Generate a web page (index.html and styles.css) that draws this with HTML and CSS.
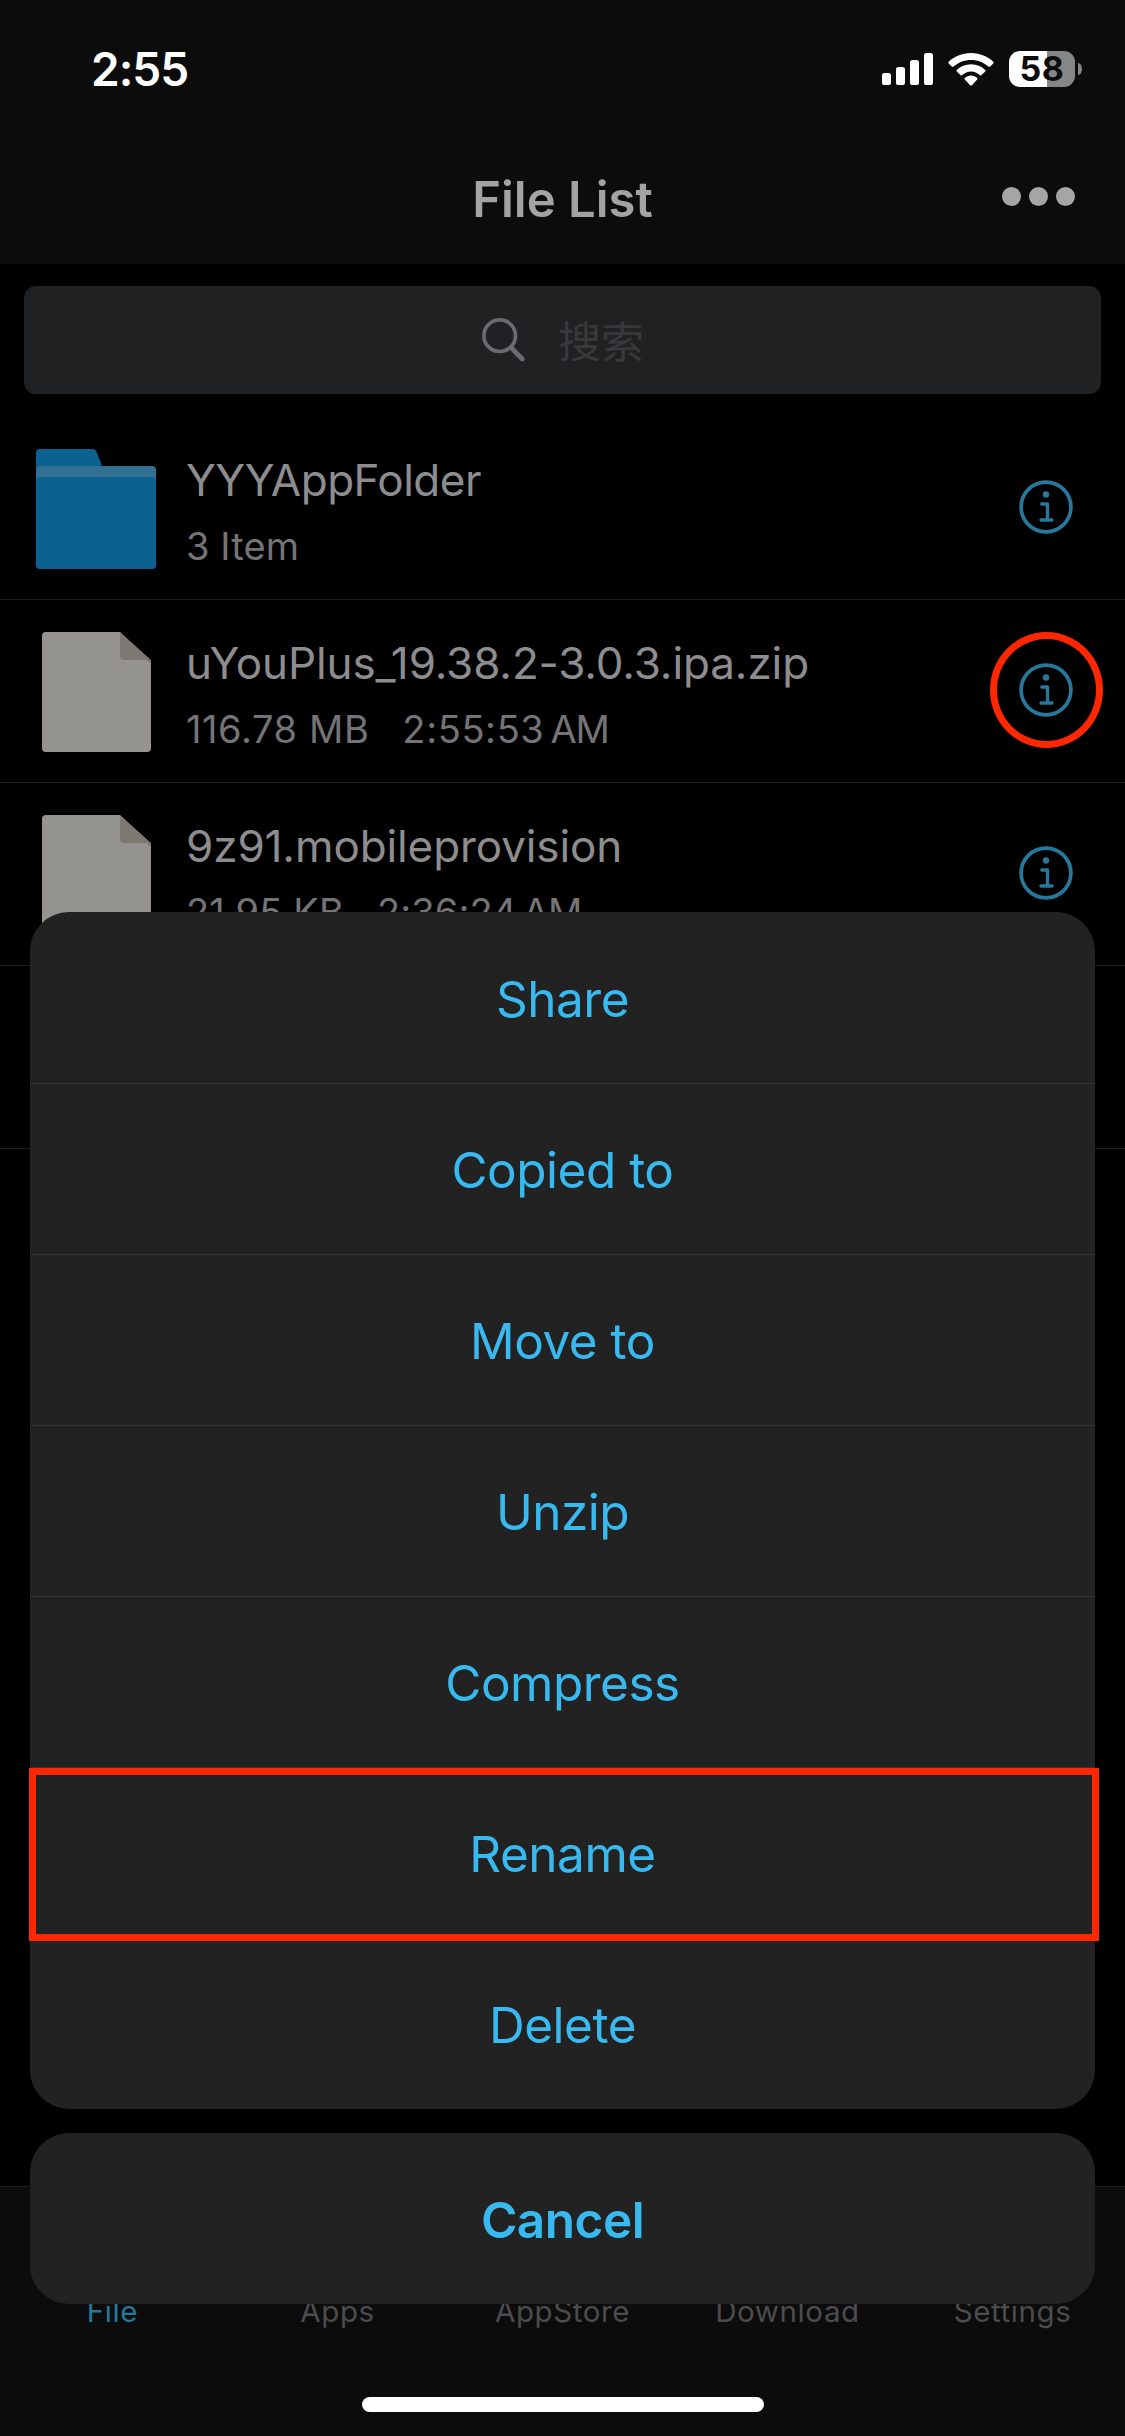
FILE: index.html
```
<!DOCTYPE html>
<html lang="en">
<head>
<meta charset="utf-8">
<title>File List</title>
<link rel="stylesheet" href="styles.css">
</head>
<body>
<svg width="0" height="0" class="defs">
  <symbol id="info" viewBox="0 0 56 56">
    <circle cx="28" cy="28" r="24.9" fill="none" stroke="currentColor" stroke-width="3.7"/>
    <circle cx="28" cy="15.500" r="3.2" fill="currentColor"/>
    <path d="M23.800 25H29.500V41M23 41H34" fill="none" stroke="currentColor" stroke-width="3.3" stroke-linecap="round" stroke-linejoin="round"/>
  </symbol>
  <symbol id="doc" viewBox="0 0 110 120">
    <path d="M4 0H78L109 31V116a4 4 0 0 1-4 4H4a4 4 0 0 1-4-4V4a4 4 0 0 1 4-4Z" fill="#959390"/>
    <path d="M78 0L109 28V31L106 28H82a4 4 0 0 1-4-4Z" fill="#7e7872"/>
  </symbol>
</svg>
<div class="screen">
  <header class="top">
    <div class="status">
      <span class="time">2:55</span>
      <div class="status-icons">
        <svg width="51" height="32" viewBox="0 0 51 32" fill="#fff">
          <rect x="0" y="20" width="9" height="12" rx="2.6"/>
          <rect x="14" y="14" width="9" height="18" rx="2.6"/>
          <rect x="28" y="7" width="9" height="25" rx="2.6"/>
          <rect x="42" y="0" width="9" height="32" rx="2.6"/>
        </svg>
        <svg width="46" height="33" viewBox="0 0 46 33" fill="#fff">
          <path d="M23 0C32 0 40 3.5 45.300 8.700Q46 9.600 45.300 10.400L42.200 13.600Q41.300 14.400 40.400 13.600C36 9.600 30 7 23 7S10 9.600 5.600 13.600Q4.700 14.400 3.800 13.600L.7 10.400Q0 9.600.7 8.700C6 3.500 14 0 23 0Z"/>
          <path d="M23 11.200C28.600 11.200 33.600 13.400 37.200 16.900Q38 17.800 37.200 18.600L33.600 22.100Q32.700 22.900 31.800 22.100C29.500 20 26.400 18.500 23 18.500S16.500 20 14.200 22.100Q13.300 22.900 12.400 22.100L8.800 18.600Q8 17.800 8.800 16.900C12.400 13.400 17.400 11.200 23 11.200Z"/>
          <path d="M23 22.500C25.500 22.500 27.600 23.400 29.200 24.900Q30 25.800 29.200 26.600L23.900 32.200Q23 33 22.100 32.200L16.800 26.600Q16 25.800 16.800 24.900C18.400 23.400 20.500 22.500 23 22.500Z"/>
        </svg>
        <div class="battery"><span class="level">58</span><i class="nub"></i></div>
      </div>
    </div>
    <div class="nav">
      <h1>File List</h1>
      <div class="more"><i></i><i></i><i></i></div>
    </div>
  </header>

  <div class="search">
    <svg width="44" height="45" viewBox="0 0 44 45" fill="none" stroke="#6b6a6e">
      <circle cx="17.700" cy="17.700" r="15.800" stroke-width="3.700"/>
      <path d="M29.500 30L40.300 41" stroke-width="4.800" stroke-linecap="round"/>
    </svg>
    <span>搜索</span>
  </div>

  <main class="list">
    <div class="row">
      <div class="thumb">
        <svg width="120" height="120" viewBox="0 0 120 120">
          <path d="M4 0H57Q59.500 0 60.500 2.500L66 17V30H0V4a4 4 0 0 1 4-4Z" fill="#0b618f"/>
          <path d="M4 17H116a4 4 0 0 1 4 4V40H0V21a4 4 0 0 1 4-4Z" fill="#327093"/>
          <path d="M4 28H116a4 4 0 0 1 4 4V116a4 4 0 0 1-4 4H4a4 4 0 0 1-4-4V32a4 4 0 0 1 4-4Z" fill="#0b618f"/>
        </svg>
      </div>
      <div class="text">
        <div class="name tight">YYYAppFolder</div>
        <div class="meta count"><span>3 Item</span></div>
      </div>
      <svg class="info" width="56" height="56"><use href="#info"/></svg>
    </div>
    <div class="row">
      <div class="thumb"><svg width="110" height="120"><use href="#doc"/></svg></div>
      <div class="text">
        <div class="name">uYouPlus_19.38.2-3.0.3.ipa.zip</div>
        <div class="meta"><span>116.78 MB</span><span class="when"><span>2:55:53</span><span class="ampm">AM</span></span></div>
      </div>
      <svg class="info" width="56" height="56"><use href="#info"/></svg>
      <i class="ring"></i>
    </div>
    <div class="row">
      <div class="thumb"><svg width="110" height="120"><use href="#doc"/></svg></div>
      <div class="text">
        <div class="name">9z91.mobileprovision</div>
        <div class="meta count"><span>21.95 KB</span><span class="when"><span>2:36:24</span><span class="ampm">AM</span></span></div>
      </div>
      <svg class="info" width="56" height="56"><use href="#info"/></svg>
    </div>
    <div class="row"></div>
  </main>

  <nav class="tabs">
    <span class="active">File</span><span>Apps</span><span>AppStore</span><span>Download</span><span>Settings</span>
  </nav>

  <div class="sheet">
    <div class="actions">
      <button>Share</button>
      <button>Copied to</button>
      <button>Move to</button>
      <button>Unzip</button>
      <button>Compress</button>
      <button>Rename</button>
      <button>Delete</button>
    </div>
    <button class="cancel">Cancel</button>
    <i class="frame"></i>
  </div>
  <i class="home"></i>
</div>
</body>
</html>
```
FILE: styles.css
```
* { box-sizing: border-box; margin: 0; }
body { background: #000; font-family: Inter, "Noto Sans CJK SC", sans-serif; }
.defs { position: absolute; }
svg { display: block; flex: none; }

.screen {
  position: relative;
  width: 1125px;
  height: 2436px;
  display: flex;
  flex-direction: column;
  overflow: hidden;
  background: #000;
}

.top { height: 264px; background: #0c0c0c; }
.status {
  height: 132px;
  padding: 0 43px 0 91px;
  display: flex;
  justify-content: space-between;
  align-items: center;
}
.time { color: #fff; font-size: 46px; font-weight: 600; letter-spacing: -1px; padding-top: 5px; }
.status-icons { display: flex; align-items: center; gap: 15px; padding-top: 6px; }
.battery {
  position: relative;
  width: 66px;
  height: 36px;
  margin-right: 7px;
  border-radius: 11px;
  background: linear-gradient(to right, #fff 38px, #868686 38px);
}
.level {
  display: block;
  text-align: center;
  line-height: 36px;
  font-size: 34px;
  font-weight: 700;
  letter-spacing: .5px;
  color: #0c0c0c;
}
.nub {
  position: absolute;
  left: 69px;
  top: 12px;
  width: 4px;
  height: 12px;
  border-radius: 0 4px 4px 0 / 0 6px 6px 0;
  background: #868686;
}
.nav {
  height: 132px;
  padding: 0 50px;
  display: grid;
  grid-template-columns: 1fr auto 1fr;
  align-items: center;
}
h1 { grid-column: 2; font-size: 49px; font-weight: 600; color: #a3a3a3; padding-top: 2px; }
.more { display: flex; justify-content: flex-end; gap: 8px; padding-bottom: 3px; }
.more i { width: 19px; height: 19px; border-radius: 50%; background: #a5a5a5; }

.search {
  height: 108px;
  margin: 22px 24px 0;
  border-radius: 12px;
  background: #202123;
  display: flex;
  align-items: center;
  justify-content: center;
  gap: 32px;
  padding-left: 1px;
}
.search span { font: 43px/60px "Noto Sans CJK SC", sans-serif; color: #38393b; padding-bottom: 3px; }

.list { margin-top: 23px; flex: 1; }
.row {
  position: relative;
  height: 183px;
  display: flex;
  align-items: flex-start;
  border-bottom: 1px solid #1f2022;
}
.thumb { width: 186px; padding: 32px 0 0 36px; }
.row:not(:first-child) .thumb { padding-left: 42px; }
.text { flex: 1; padding-top: 38px; }
.name {
  font-size: 44px;
  line-height: 50px;
  letter-spacing: -.1px;
  color: #8d8d8f;
  white-space: nowrap;
}
.tight { letter-spacing: -.5px; }
.meta {
  margin-top: 16px;
  display: flex;
  gap: 33px;
  font-size: 38px;
  line-height: 50px;
  letter-spacing: .6px;
  color: #747476;
}
.count { letter-spacing: .1px; }
.when { display: flex; gap: 6px; }
.ampm { letter-spacing: -1px; }
.info { margin: 62px 51px 0 0; color: #26799d; }
.ring {
  position: absolute;
  left: 990px;
  top: 32px;
  width: 113px;
  height: 116px;
  border: 7px solid #fd2702;
  border-radius: 50%;
}

.tabs {
  height: 250px;
  border-top: 1px solid #1f2022;
  background: #0c0c0c;
  display: grid;
  grid-template-columns: repeat(5, 1fr);
  padding-top: 104px;
  text-align: center;
  font-size: 29.5px;
  line-height: 40px;
  letter-spacing: .6px;
  color: #4c4c4e;
}
.tabs .active { color: #26799d; }

.sheet {
  position: absolute;
  left: 30px;
  right: 30px;
  top: 912px;
  display: flex;
  flex-direction: column;
  gap: 24px;
}
.actions { border-radius: 39px; overflow: hidden; background: #222; }
button {
  display: block;
  width: 100%;
  height: 171px;
  border: 0;
  padding: 2px 0 0;
  background: none;
  font: 400 49.5px Inter, sans-serif;
  letter-spacing: -.5px;
  color: #38baf0;
}
.actions button + button { border-top: 1px solid #353535; }
.cancel { border-radius: 39px; background: #222; font-weight: 600; }
.frame {
  position: absolute;
  left: -1px;
  top: 856px;
  width: 1070px;
  height: 173px;
  border: 7px solid #fd2702;
}
.home {
  position: absolute;
  left: 362px;
  top: 2397px;
  width: 402px;
  height: 15px;
  border-radius: 8px;
  background: #fff;
}
```
